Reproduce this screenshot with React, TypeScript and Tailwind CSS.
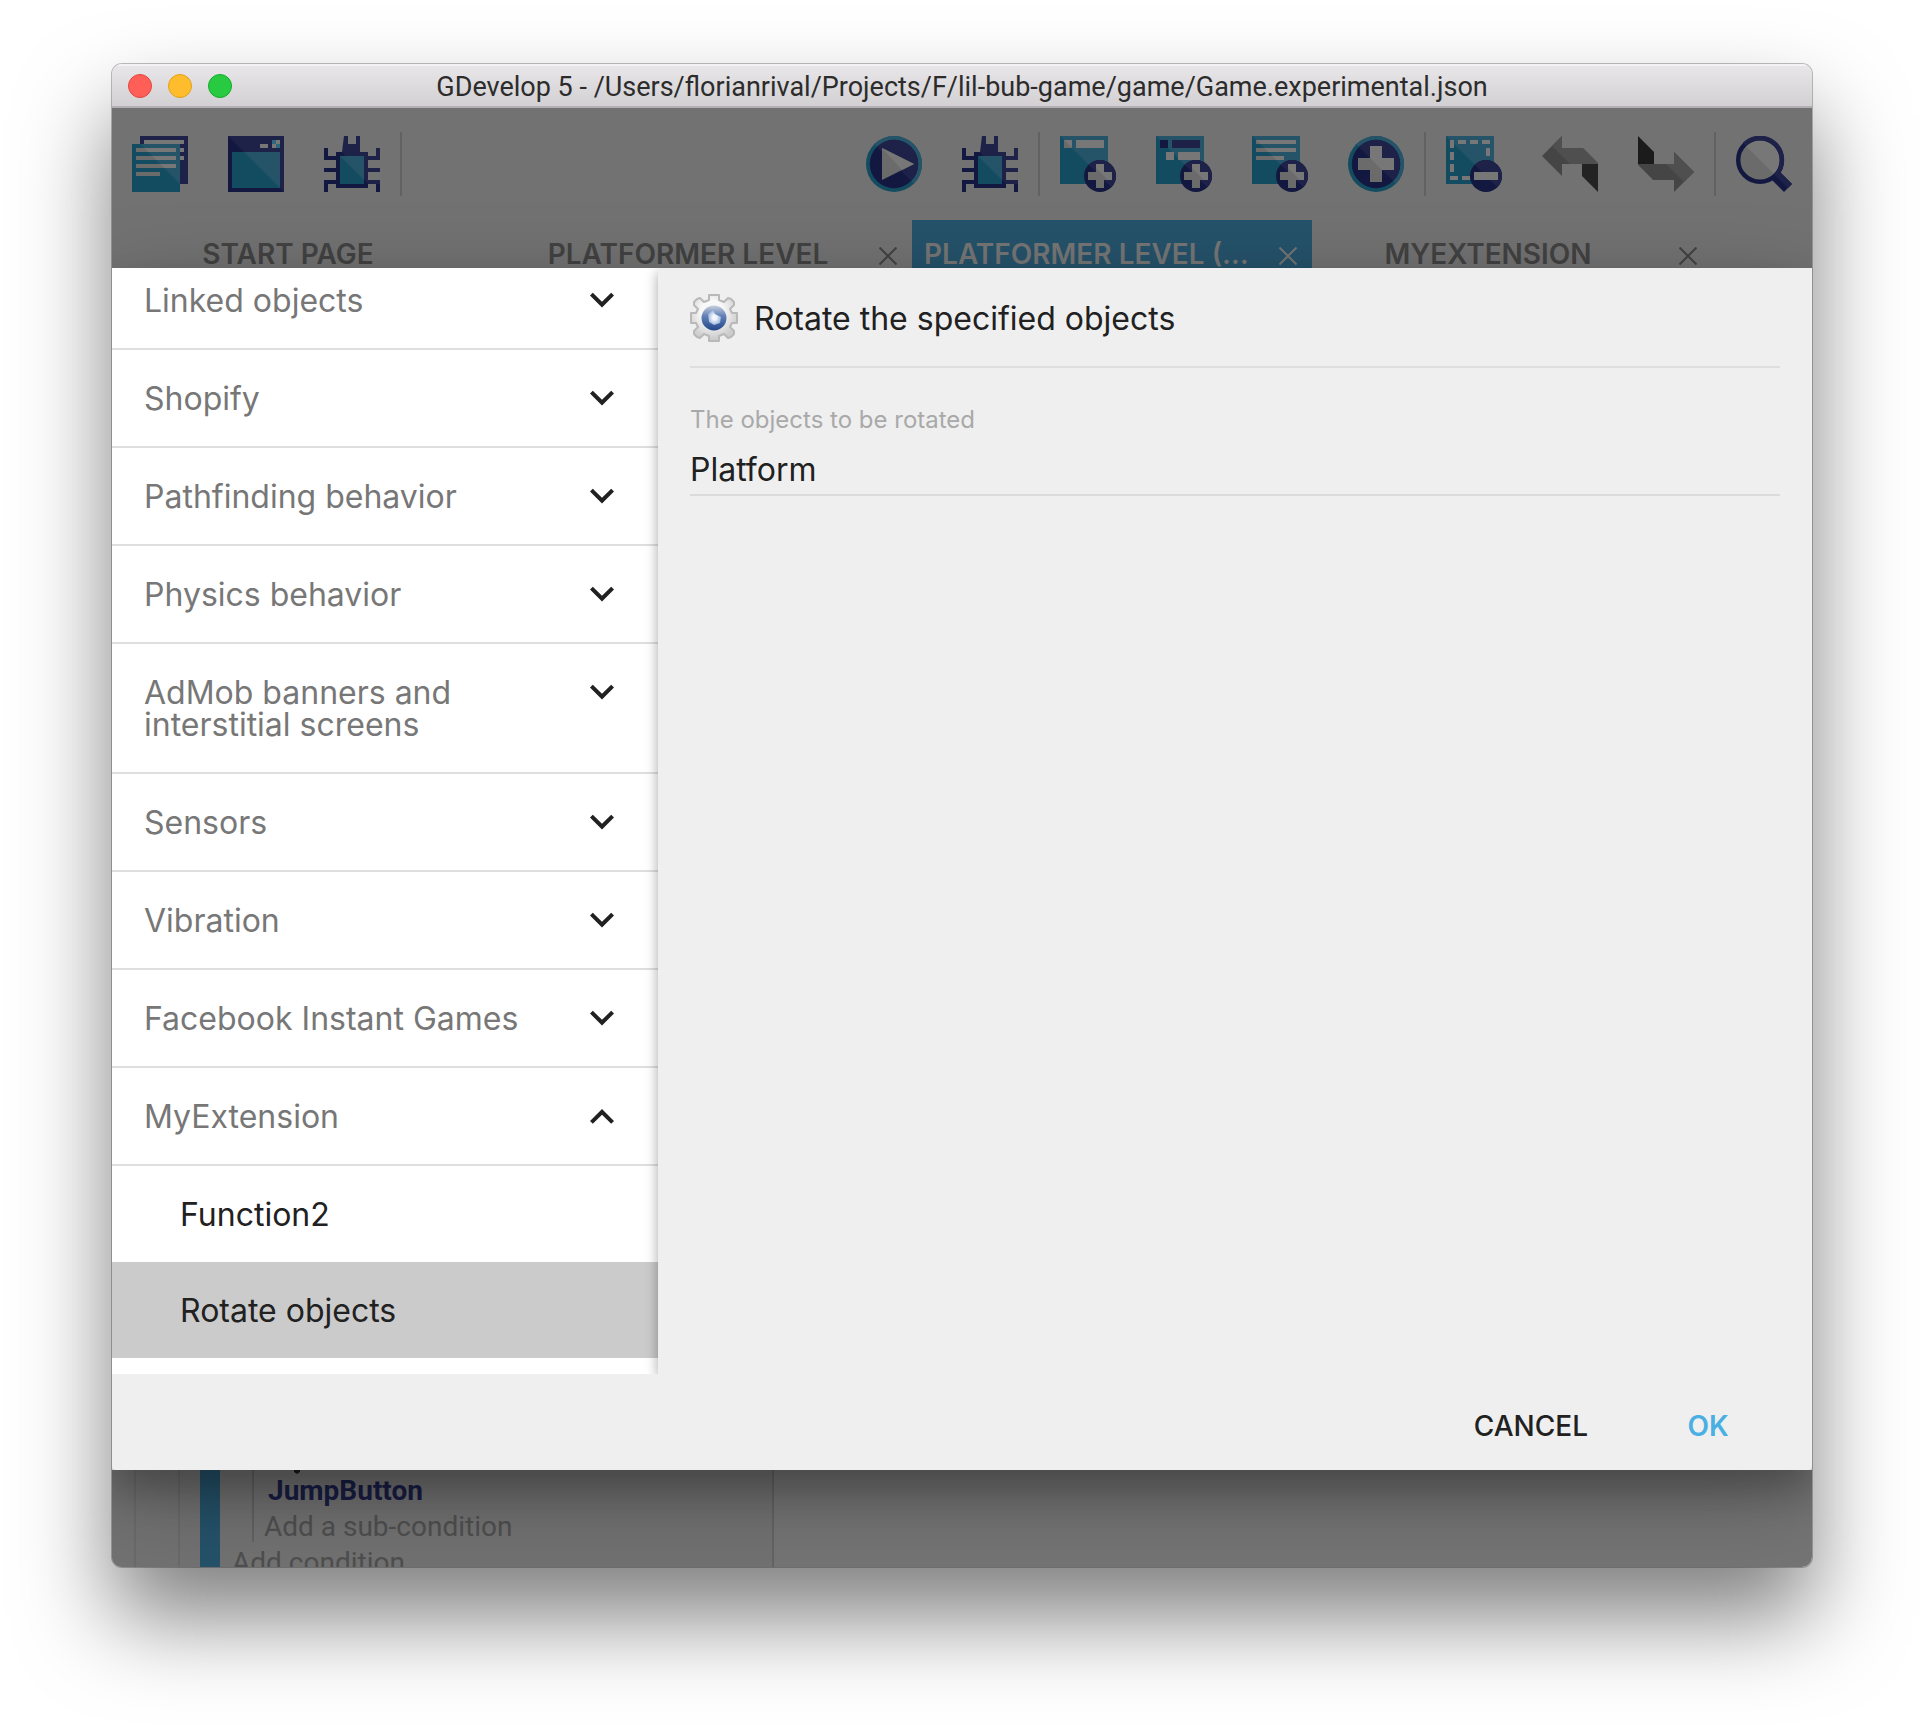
import React from 'react';

const NAVY = '#12183f';
const NAVY_LIGHT = '#1e2249';
const TEAL = '#134b60';
const TEAL_LIGHT = '#255469';
const GREY = '#6b6b6b';
const GREY_LIGHT = '#777777';

/* Toolbar icons are drawn on a 14 x 14 unit grid. */
function Glyph({ children }: { children: React.ReactNode }) {
  return (
    <svg viewBox="0 0 14 14" className="size-14 shrink-0" aria-hidden="true">
      {children}
    </svg>
  );
}

function ProjectIcon() {
  return (
    <Glyph>
      <path d="M2 0h12v12H2z" fill={NAVY_LIGHT} />
      <path d="M3 1h10v1H3zM12 3h1v1h-1zM12 5h1v1h-1z" fill={GREY_LIGHT} />
      <path d="M0 2h12v12H0z" fill={TEAL} />
      <path d="M2 2h10v10z" fill={TEAL_LIGHT} />
      <path d="M1 3h10v1H1zM1 5h10v1H1zM1 7h10v1H1zM1 9h6v1H1z" fill={GREY} />
      <path d="M3 3h8v1H4zM5 5h6v1H6zM7 7h4v1H8z" fill={GREY_LIGHT} />
    </Glyph>
  );
}

function WindowIcon() {
  return (
    <Glyph>
      <path d="M0 0h14v14H0z" fill={NAVY} />
      <path d="M0 0h14v14z" fill={NAVY_LIGHT} />
      <path d="M1 4h12v9H1z" fill={TEAL} />
      <path d="M4 4h9v9z" fill={TEAL_LIGHT} />
      <path d="M8 2h2v1H8zM12 1h1v1h-1zM11 2h1v1h-1z" fill={GREY_LIGHT} />
      <path d="M11 1h1v1h-1zM12 2h1v1h-1z" fill="#2e6880" />
    </Glyph>
  );
}

function BugIcon() {
  return (
    <Glyph>
      <path
        d="M5 0h1v2h2V0h1v4h2v1h2V3h1v3h-3v2h3v1h-3v2h3v3h-1v-2h-2v1H3v-1H1v2H0v-3h3V9H0V8h3V6H0V3h1v2h2V4h2z"
        fill={NAVY}
      />
      <path d="M5 0h1v2h2V0h1v4h2v1h2V3h1v3h-3v2h3v1h-3v2h3v1h-3L4.500 4z" fill={NAVY_LIGHT} />
      <path d="M4 5h6v7H4z" fill={TEAL} />
      <path d="M4 5h6v6z" fill={TEAL_LIGHT} />
    </Glyph>
  );
}

function PlayIcon() {
  return (
    <Glyph>
      <circle cx="7" cy="7" r="7" fill={TEAL} />
      <path d="M2.050 2.050A7 7 0 0 1 11.950 11.950z" fill={TEAL_LIGHT} />
      <circle cx="7" cy="7" r="6.050" fill={NAVY} />
      <path d="M2.720 2.720A6.050 6.050 0 0 1 11.280 11.280z" fill={NAVY_LIGHT} />
      <path d="M4 3l8 4-8 4z" fill={GREY} />
      <path d="M4 3l8 4-3 1.500z" fill={GREY_LIGHT} />
    </Glyph>
  );
}

function Badge({ minus = false }: { minus?: boolean }) {
  return (
    <>
      <circle cx="10" cy="10" r="4" fill={NAVY} />
      <path d="M7.170 7.170A4 4 0 0 1 12.830 12.830z" fill={NAVY_LIGHT} />
      {minus ? (
        <path d="M7 9h6v2H7z" fill={GREY_LIGHT} />
      ) : (
        <>
          <path d="M9 7h2v2h2v2h-2v2H9v-2H7V9h2z" fill={GREY} />
          <path d="M9 7h2v2h2v2h-1L9 8z" fill={GREY_LIGHT} />
        </>
      )}
    </>
  );
}

function Sheet() {
  return (
    <>
      <path d="M0 0h12v12H0z" fill={TEAL} />
      <path d="M0 0h12v12z" fill={TEAL_LIGHT} />
    </>
  );
}

function AddEventIcon() {
  return (
    <Glyph>
      <Sheet />
      <path d="M1 1h2v2H1z" fill={GREY} />
      <path d="M1 1h2v2zM4 1h7v2H4z" fill={GREY_LIGHT} />
      <Badge />
    </Glyph>
  );
}

function AddSubEventIcon() {
  return (
    <Glyph>
      <Sheet />
      <path d="M1 1h2v2H1z" fill={NAVY} />
      <path d="M4 1h7v2H4z" fill={NAVY_LIGHT} />
      <path d="M2.500 4h2v2h-2zM5.500 4H11v2H5.500z" fill={GREY_LIGHT} />
      <Badge />
    </Glyph>
  );
}

function AddCommentIcon() {
  return (
    <Glyph>
      <Sheet />
      <path d="M1 1h10v1H1zM1 3h10v1H1zM1 5h7v1H1z" fill={GREY} />
      <path d="M1 1h10v1H2zM3 3h8v1H4zM5 5h3v1H6z" fill={GREY_LIGHT} />
      <Badge />
    </Glyph>
  );
}

function AddIcon() {
  return (
    <Glyph>
      <circle cx="7" cy="7" r="7" fill={TEAL} />
      <path d="M2.050 2.050A7 7 0 0 1 11.950 11.950z" fill={TEAL_LIGHT} />
      <circle cx="7" cy="7" r="6.050" fill={NAVY} />
      <path d="M2.720 2.720A6.050 6.050 0 0 1 11.280 11.280z" fill={NAVY_LIGHT} />
      <path d="M5.500 2.500h3v3h3v3h-3v3h-3v-3h-3v-3h3z" fill={GREY} />
      <path d="M5.500 2.500h3v3h3v3h-3l-3-3z" fill={GREY_LIGHT} />
    </Glyph>
  );
}

function RemoveSelectionIcon() {
  return (
    <Glyph>
      <Sheet />
      <path
        d="M1 1h1v2H1zM3 1h2v1H3zM6 1h2v1H6zM9 1h2v1H9zM10 3h1v2h-1zM1 4h1v2H1zM1 7h1v2H1zM1 10h2v1H1zM4 10h2v1H4z"
        fill={GREY_LIGHT}
      />
      <Badge minus />
    </Glyph>
  );
}

function UndoIcon() {
  return (
    <Glyph>
      <path d="M5 0v3h5.200L14 6.800V7H5v3L0 5z" fill="#454545" />
      <path d="M5 0v3h5.200L14 6.800V7H7L2.500 2.500z" fill="#4f4f4f" />
      <path d="M10 7h4v7l-4-4z" fill="#232323" />
    </Glyph>
  );
}

function RedoIcon() {
  return (
    <Glyph>
      <path d="M0 0l4 4v3H0z" fill="#1b1b1b" />
      <path d="M0 7h9V4l5 5-5 5v-3H3.800L0 7.200z" fill="#454545" />
      <path d="M7 7h2V4l5 5-2.500 2.500z" fill="#4f4f4f" />
    </Glyph>
  );
}

function SearchIcon() {
  return (
    <Glyph>
      <circle cx="6" cy="6" r="5.500" fill={GREY} />
      <path d="M2.100 2.100A5.500 5.500 0 0 1 9.900 9.900z" fill={GREY_LIGHT} />
      <circle cx="6" cy="6" r="5.450" fill="none" stroke={NAVY} strokeWidth="1.100" />
      <path d="M2.100 2.100A5.500 5.500 0 0 1 9.900 9.900" fill="none" stroke={NAVY_LIGHT} strokeWidth="1.100" />
      <path d="M11 9l3 3-2 2-3-3z" fill={NAVY} />
      <path d="M11 9l3 3-1 1-3-3z" fill={NAVY_LIGHT} />
    </Glyph>
  );
}

function GearIcon() {
  return (
    <svg viewBox="0 0 48 48" className="size-12 shrink-0" aria-hidden="true">
      <defs>
        <radialGradient id="gearBody" cx="46%" cy="36%" r="60%">
          <stop offset="0.400" stopColor="#f8f8f8" />
          <stop offset="1" stopColor="#cccccc" />
        </radialGradient>
        <linearGradient id="gearRing" x1="0" y1="0" x2="0" y2="1">
          <stop offset="0" stopColor="#c9d0dd" />
          <stop offset="0.400" stopColor="#6583b8" />
          <stop offset="1" stopColor="#214689" />
        </linearGradient>
        <radialGradient id="gearCore">
          <stop offset="0.300" stopColor="#f3f6fb" />
          <stop offset="1" stopColor="#9db6de" />
        </radialGradient>
      </defs>
      <path
        d="M19 1h10v5l5 2 4-4 3 1 3 3v3l-4 4 2 4h5v10h-5l-2 4 4 4v3l-3 3-3 1-4-4-5 2v5H19v-5l-5-2-4 4-3-1-3-3v-3l4-4-2-4H1V19h5l2-4-4-4V8l3-3 3-1 4 4 5-2z"
        fill="url(#gearBody)"
        stroke="#b9b9b9"
        strokeWidth="2"
        strokeLinejoin="round"
      />
      <circle cx="24" cy="24" r="12.500" fill="url(#gearRing)" />
      <path d="M18 20l5-4 2 4 6 3-1 6-6 2-5-3z" fill="url(#gearCore)" />
    </svg>
  );
}

function ToolButton({ label, icon }: { label: string; icon: React.ReactNode }) {
  return (
    <button type="button" aria-label={label} className="flex h-28 w-24 items-center justify-center">
      {icon}
    </button>
  );
}

function ToolSeparator() {
  return <div className="h-16 w-0.5 bg-[#626262]" />;
}

function CloseIcon() {
  return (
    <svg viewBox="0 0 18 18" className="size-[18px]" fill="none" stroke="currentColor" strokeWidth="2" aria-hidden="true">
      <path d="M0.500 0.500l17 17M17.500 0.500l-17 17" />
    </svg>
  );
}

function Tab({ label, active = false, closable = true }: { label: string; active?: boolean; closable?: boolean }) {
  return (
    <div
      className={
        active
          ? 'flex w-[400px] bg-[#25526a] text-[#757575]'
          : 'flex w-[400px] text-[#424242]'
      }
    >
      <button type="button" className="min-w-0 flex-1 truncate px-3 pt-5 text-[28px] leading-7 font-semibold">
        {label}
      </button>
      <div className="flex w-12 shrink-0 justify-center pt-[27px]">
        {closable && (
          <button type="button" aria-label={'Close ' + label} className="h-[18px]">
            <CloseIcon />
          </button>
        )}
      </div>
    </div>
  );
}

function Chevron({ up = false }: { up?: boolean }) {
  return (
    <svg viewBox="0 0 24 24" className="-my-2 size-12 shrink-0" fill="#212121" aria-hidden="true">
      <path d={up ? 'M7.410 15.410L12 10.830l4.590 4.580L18 14l-6-6-6 6z' : 'M7.410 7.840L12 12.420l4.590-4.580L18 9.250l-6 6-6-6z'} />
    </svg>
  );
}

function Group({ label, open = false }: { label: string; open?: boolean }) {
  return (
    <button
      type="button"
      aria-expanded={open}
      className="flex w-full items-start justify-between border-b-2 border-[#dfdfdf] px-8 pt-[33px] pb-[31px] text-left text-[#777777]"
    >
      <span className="w-[380px] text-[32px] leading-8">{label}</span>
      <Chevron up={open} />
    </button>
  );
}

const groups = [
  'Linked objects',
  'Shopify',
  'Pathfinding behavior',
  'Physics behavior',
  'AdMob banners and interstitial screens',
  'Sensors',
  'Vibration',
  'Facebook Instant Games',
];

export default function App() {
  return (
    <div className="bg-white px-28 pt-16 pb-40 font-['Inter',sans-serif]">
      <div className="overflow-hidden rounded-[10px] shadow-[0_0_0_1px_rgba(0,0,0,0.25),0_50px_90px_rgba(0,0,0,0.5)]">
        <header className="flex h-11 items-center border-t-2 border-b-2 border-t-[#f4f3f4] border-b-[#b1afb1] bg-linear-to-b from-[#e8e6e8] to-[#d2d0d2] px-4">
          <div className="flex w-32 gap-4">
            <button type="button" aria-label="Close window" className="size-6 rounded-full border border-[#e2463f] bg-[#ff5f57]" />
            <button type="button" aria-label="Minimize window" className="size-6 rounded-full border border-[#e1a116] bg-[#ffbd2e]" />
            <button type="button" aria-label="Zoom window" className="size-6 rounded-full border border-[#12ac28] bg-[#28ca41]" />
          </div>
          <h1 className="flex-1 truncate pt-0.5 text-center font-['Roboto',sans-serif] text-[27px] leading-8 text-[#2c2c2c]">
            GDevelop 5 - /Users/florianrival/Projects/F/lil-bub-game/game/Game.experimental.json
          </h1>
          <div className="w-32" />
        </header>

        <div className="bg-[#727272]">
          <div className="flex items-center justify-between">
            <div className="flex items-center">
              <ToolButton label="Project manager" icon={<ProjectIcon />} />
              <ToolButton label="Preview window" icon={<WindowIcon />} />
              <ToolButton label="Debugger" icon={<BugIcon />} />
              <ToolSeparator />
            </div>
            <div className="flex items-center">
              <ToolButton label="Play" icon={<PlayIcon />} />
              <ToolButton label="Debug" icon={<BugIcon />} />
              <ToolSeparator />
              <ToolButton label="Add event" icon={<AddEventIcon />} />
              <ToolButton label="Add sub-event" icon={<AddSubEventIcon />} />
              <ToolButton label="Add comment" icon={<AddCommentIcon />} />
              <ToolButton label="Add other" icon={<AddIcon />} />
              <ToolSeparator />
              <ToolButton label="Remove selection" icon={<RemoveSelectionIcon />} />
              <ToolButton label="Undo" icon={<UndoIcon />} />
              <ToolButton label="Redo" icon={<RedoIcon />} />
              <ToolSeparator />
              <ToolButton label="Search" icon={<SearchIcon />} />
            </div>
          </div>
          <nav className="flex">
            <Tab label="START PAGE" closable={false} />
            <Tab label="PLATFORMER LEVEL" />
            <Tab label="PLATFORMER LEVEL (EVENTS)" active />
            <Tab label="MYEXTENSION" />
          </nav>
        </div>

        <section
          role="dialog"
          aria-label="Edit action"
          className="relative z-10 rounded-b-[4px] bg-[#efefef] shadow-[0_28px_90px_rgba(0,0,0,0.25),0_20px_36px_rgba(0,0,0,0.22)]"
        >
          <div className="flex">
            <div className="w-[546px] shrink-0 overflow-hidden bg-white pb-4">
              <div className="-mt-4">
                {groups.map((g) => (
                  <Group key={g} label={g} />
                ))}
                <Group label="MyExtension" open />
                <button type="button" className="block w-full pt-[33px] pb-[31px] pl-[68px] text-left text-[32px] leading-8 text-[#212121]">
                  Function2
                </button>
                <button
                  type="button"
                  className="block w-full bg-[#cbcbcb] pt-[33px] pb-[31px] pl-[68px] text-left text-[32px] leading-8 text-[#212121]"
                >
                  Rotate objects
                </button>
              </div>
            </div>
            <div className="min-w-0 flex-1 px-8 pt-[26px] shadow-[0_4px_12px_rgba(0,0,0,0.35)] [clip-path:inset(0_0_0_-20px)]">
              <div className="flex items-center gap-4 border-b-2 border-[#dedede] pb-6">
                <GearIcon />
                <h2 className="pt-0.5 text-[32px] leading-10 text-[#212121]">Rotate the specified objects</h2>
              </div>
              <label htmlFor="objects" className="mt-9 block text-[24px] leading-8 text-[#a9a9a9]">
                The objects to be rotated
              </label>
              <input
                id="objects"
                type="text"
                defaultValue="Platform"
                className="mt-3 block h-12 w-full border-b-2 border-[#dbdbdb] bg-transparent pb-1 text-[32px] leading-10 text-[#212121] outline-none"
              />
            </div>
          </div>
          <footer className="flex justify-end px-4 pt-4 pb-2 text-[28px] font-medium">
            <button type="button" className="h-[72px] min-w-44 px-8 text-[#212121]">
              CANCEL
            </button>
            <button type="button" className="h-[72px] min-w-44 px-8 font-semibold text-[#4ab0e4]">
              OK
            </button>
          </footer>
        </section>

        <div className="flex h-[97px] overflow-hidden bg-[#757575] font-['Roboto',sans-serif] text-[28px]">
          <div className="w-6 border-r-2 border-[#6a6a6a] bg-[#727272]" />
          <div className="w-11 border-r-2 border-[#6a6a6a] bg-[#727272]" />
          <div className="w-5 bg-[#727272]" />
          <div className="w-5 bg-[#25526a]" />
          <div className="w-[554px] border-r-2 border-[#646464] bg-[#727272] pl-8">
            <div className="relative flex h-18 flex-col border-l-2 border-[#626262] pt-[3px] pl-2.5">
              <svg viewBox="0 0 6 4" className="absolute top-0 left-10 h-1 w-1.5" aria-hidden="true">
                <path d="M0 0h6v2L3 4 0 2z" fill="#1c1c1c" />
              </svg>
              <button type="button" className="pl-1 text-left leading-9 font-bold text-[#191d45]">
                JumpButton
              </button>
              <button type="button" className="text-left leading-9 text-[#4f4f4f]">
                Add a sub-condition
              </button>
            </div>
            <button type="button" className="mt-[3px] -ml-5 block leading-9 text-[#4f4f4f]">
              Add condition
            </button>
          </div>
        </div>
      </div>
    </div>
  );
}
